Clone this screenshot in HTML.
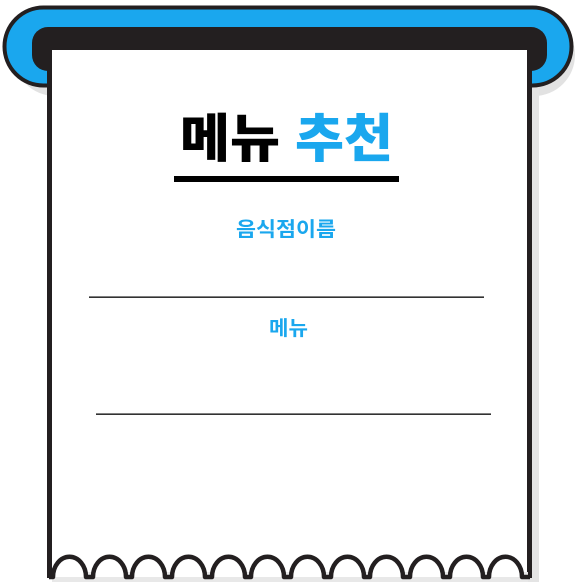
<!DOCTYPE html>
<html><head><meta charset="utf-8"><style>
html,body{margin:0;padding:0;background:#fff;width:575px;height:582px;overflow:hidden}
svg{display:block}
</style></head><body>
<svg width="575" height="582" viewBox="0 0 575 582" xmlns="http://www.w3.org/2000/svg">
<rect x="14" y="14" width="561" height="82" rx="41" fill="#e2e2e2"/>
<rect x="56" y="60" width="483" height="522" fill="#e4e4e4"/>
<rect x="4.5" y="7.5" width="567" height="78" rx="39" fill="#1aa7ee" stroke="#231f20" stroke-width="4"/>
<rect x="32" y="27" width="515" height="44" rx="16" fill="#231f20"/>
<path d="M49,50 L530,50 L530,577 L52,577 Z" fill="#fff"/>
<path d="M49.5,48 L49.5,578 M529.5,48 L529.5,578" stroke="#231f20" stroke-width="5" fill="none"/>
<rect x="52" y="572" width="476" height="10" fill="#e8e8e8"/>
<path fill="#fff" stroke="#231f20" stroke-width="4.5" stroke-linejoin="round" d="
M49,577
L53,577 A15.5 19 0 0 1 86,577
L93,577 A15.5 19 0 0 1 126,577
L132,577 A15.5 19 0 0 1 165,577
L172,577 A15.5 19 0 0 1 205,577
L212,577 A15.5 19 0 0 1 245,577
L251,577 A15.5 19 0 0 1 284,577
L291,577 A15.5 19 0 0 1 324,577
L331,577 A15.5 19 0 0 1 364,577
L370,577 A15.5 19 0 0 1 403,577
L410,577 A15.5 19 0 0 1 443,577
L450,577 A15.5 19 0 0 1 483,577
L489,577 A15.5 19 0 0 1 522,577
L530,577"/>
<text x="180" y="157" font-family="'Noto Sans CJK KR','NanumGothic',sans-serif" font-weight="900" font-size="52" fill="#000" textLength="100" lengthAdjust="spacingAndGlyphs">메뉴</text>
<text x="295" y="157" font-family="'Noto Sans CJK KR','NanumGothic',sans-serif" font-weight="900" font-size="52" fill="#1aa7ee" textLength="98" lengthAdjust="spacingAndGlyphs">추천</text>
<rect x="174" y="176" width="225" height="6" fill="#000"/>
<text x="236" y="236" font-family="'Noto Sans CJK KR','NanumGothic',sans-serif" font-weight="700" font-size="20" fill="#1aa7ee" textLength="100" lengthAdjust="spacingAndGlyphs">음식점이름</text>
<rect x="89" y="296.5" width="395" height="1.3" fill="#000"/>
<text x="269" y="335" font-family="'Noto Sans CJK KR','NanumGothic',sans-serif" font-weight="700" font-size="20" fill="#1aa7ee" textLength="39" lengthAdjust="spacingAndGlyphs">메뉴</text>
<rect x="96" y="413.5" width="395" height="1.3" fill="#000"/>
</svg>
</body></html>
